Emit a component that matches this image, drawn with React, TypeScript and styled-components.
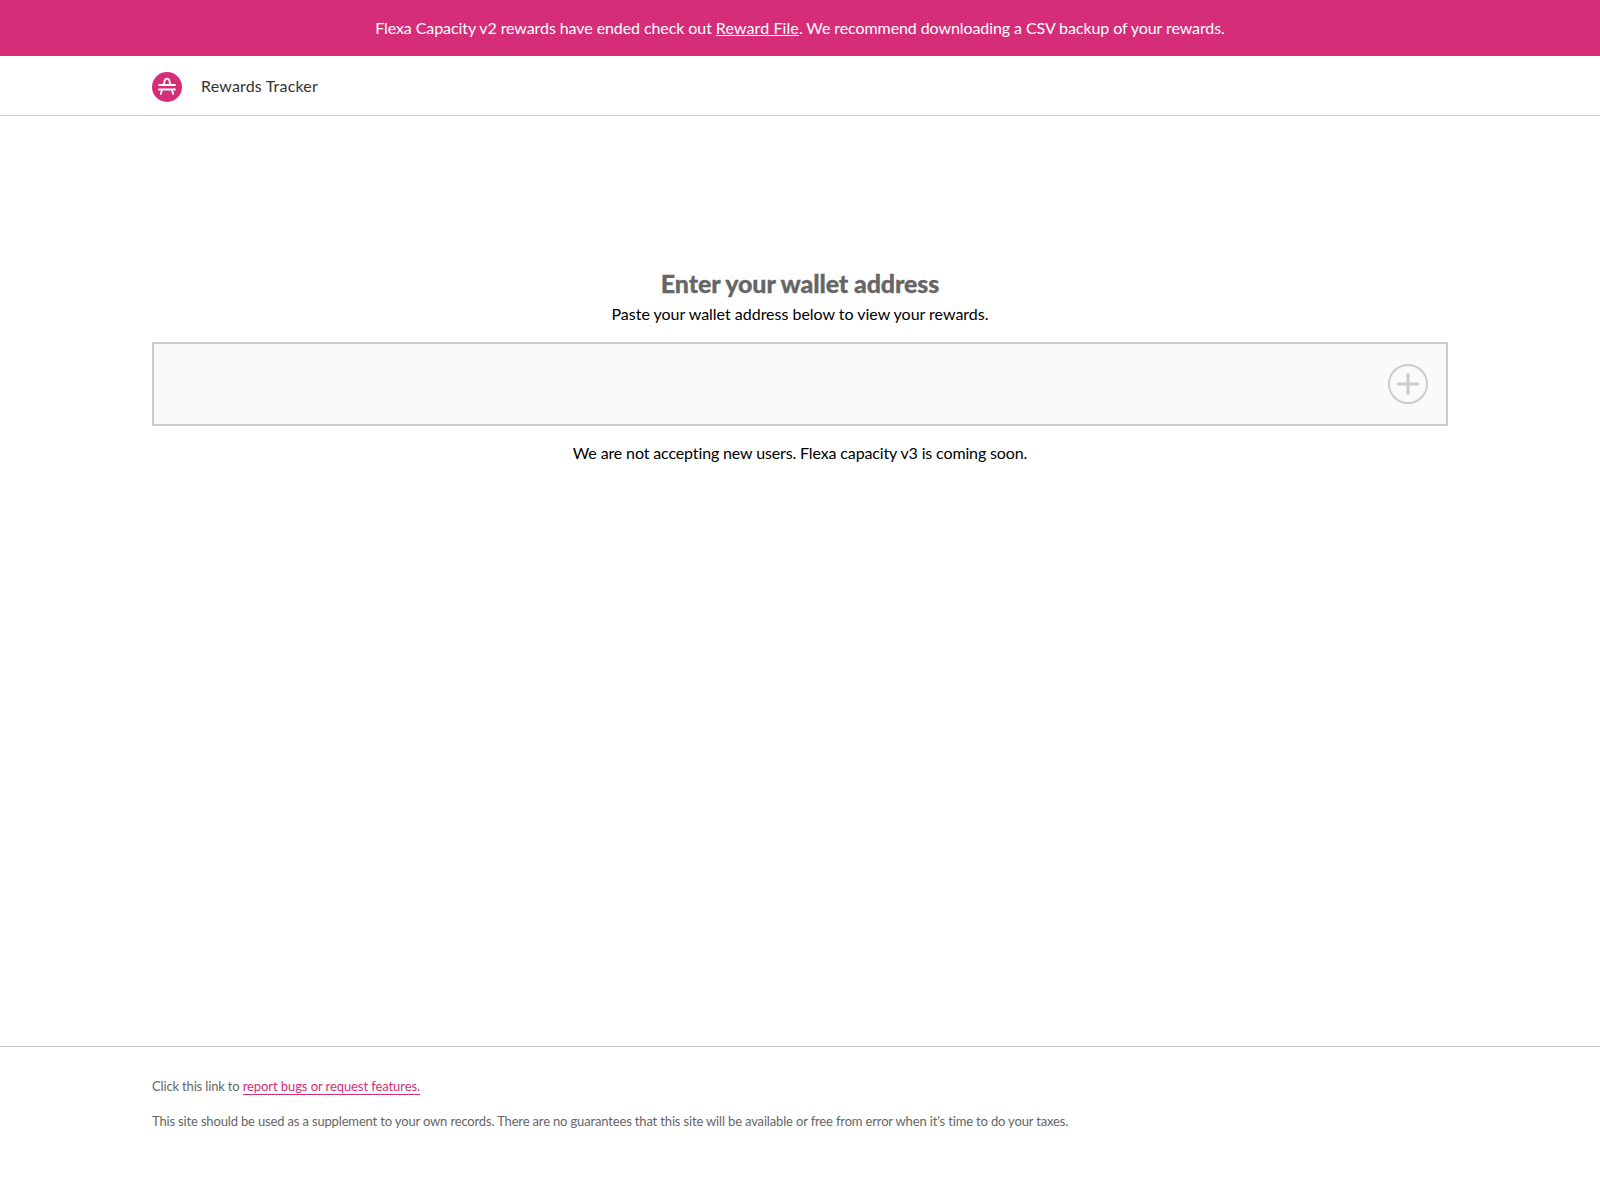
import React from "react";
import styled, { createGlobalStyle } from "styled-components";

const Global = createGlobalStyle`
  * { box-sizing: border-box; }
  body { margin: 0; background: #fff; color: #000; font-family: Lato, sans-serif; font-size: 16px; line-height: 24px; font-variant-ligatures: none; }
`;
const Page = styled.div`
  min-height: 1200px;
  display: flex;
  flex-direction: column;
`;
const Banner = styled.div`
  height: 56px;
  padding: 16px;
  background: #d62d78;
  color: #fff;
  text-align: center;
  letter-spacing: -0.085px;
`;
const BannerLink = styled.a`
  color: inherit;
  text-decoration: underline;
  letter-spacing: 0.1px;
`;
const Container = styled.div`
  width: 1296px;
  margin: 0 auto;
`;
const Header = styled.header`
  height: 60px;
  border-bottom: 1px solid #ccc;
`;
const Brand = styled(Container)`
  height: 60px;
  display: flex;
  align-items: center;
  gap: 19px;
  color: #333;
  letter-spacing: 0.18px;
`;
const Logo = styled.svg`
  margin-top: 2px;
`;
const Main = styled.main`
  flex: 1;
  padding-top: 151px;
  text-align: center;
`;
const Title = styled.h1`
  margin: 0 0 3px;
  font-size: 25px;
  line-height: 32px;
  font-weight: 900;
  letter-spacing: -0.11px;
  -webkit-text-stroke: 0.3px #666;
  color: #666;
`;
const Text = styled.p<{ $spacing?: string }>`
  margin: 0;
  letter-spacing: ${({ $spacing }) => $spacing ?? "normal"};
`;
const Field = styled.div`
  display: flex;
  height: 84px;
  margin: 16px 0 15px;
  border: 2px solid #ccc;
  background: #fafafa;
`;
const AddressInput = styled.input`
  flex: 1;
  border: 0;
  padding: 0 20px;
  background: transparent;
  font: inherit;
  outline: none;
`;
const AddButton = styled.button`
  width: 76px;
  padding: 0;
  border: 0;
  background: transparent;
  display: flex;
  align-items: center;
  justify-content: center;
`;
const Footer = styled.footer`
  height: 154px;
  border-top: 1px solid #ccc;
  padding-top: 27px;
  font-size: 13px;
  color: #666;
`;
const FooterText = styled.p`
  margin: 0 0 11px;
  letter-spacing: -0.158px;
`;
const FooterLink = styled.a`
  color: #d62d78;
  letter-spacing: -0.085px;
  border-bottom: 1px solid #d62d78;
`;

export default function App() {
  return (
    <Page>
      <Global />
      <Banner>
        Flexa Capacity v2 rewards have ended check out <BannerLink>Reward File</BannerLink>. We recommend downloading a CSV backup of your rewards.
      </Banner>
      <Header>
        <Brand>
          <Logo width="30" height="30" viewBox="0 0 30 30" fill="none">
            <circle cx="15" cy="15" r="15" fill="#d62d78" />
            <path d="M7 13H23M7 17.500H23M11.700 13L12.500 9C12.900 7.300 13.600 6.600 15 6.600S17.100 7.300 17.500 9L18.300 13M10.200 17.500L8.800 22M19.800 17.500L21.200 22" stroke="#fff" strokeWidth="1.800" strokeLinecap="round" />
          </Logo>
          <span>Rewards Tracker</span>
        </Brand>
      </Header>
      <Main>
        <Container>
          <Title>Enter your wallet address</Title>
          <Text $spacing="-0.015px">Paste your wallet address below to view your rewards.</Text>
          <Field>
            <AddressInput aria-label="Wallet address" />
            <AddButton aria-label="Add">
              <svg width="40" height="40" viewBox="0 0 40 40" fill="none" stroke="#ccc">
                <circle cx="20" cy="20" r="19" strokeWidth="2" />
                <path d="M20 10.500V29.500M10.500 20H29.500" strokeWidth="3" strokeLinecap="round" />
              </svg>
            </AddButton>
          </Field>
          <Text $spacing="-0.135px">We are not accepting new users. Flexa capacity v3 is coming soon.</Text>
        </Container>
      </Main>
      <Footer>
        <Container>
          <FooterText>Click this link to <FooterLink>report bugs or request features.</FooterLink></FooterText>
          <FooterText>This site should be used as a supplement to your own records. There are no guarantees that this site will be available or free from error when it's time to do your taxes.</FooterText>
        </Container>
      </Footer>
    </Page>
  );
}
